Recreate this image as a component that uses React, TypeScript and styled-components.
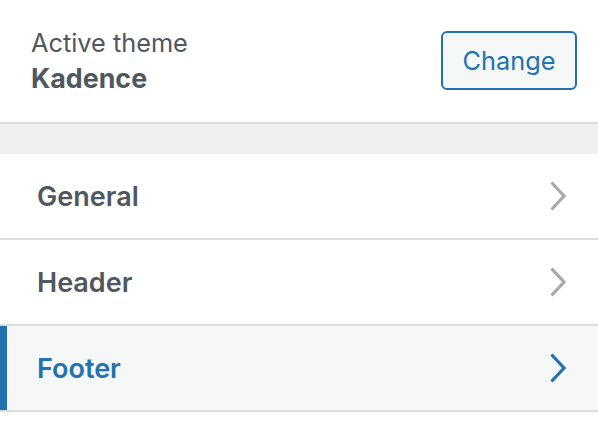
import React from "react";
import styled, { createGlobalStyle } from "styled-components";

const GlobalStyle = createGlobalStyle`
  body {
    margin: 0;
    background: #fff;
    font-family: Inter, "Liberation Sans", Arial, sans-serif;
  }
`;

const Panel = styled.div`
  width: 598px;
  height: 440px;
  background: #fff;
  overflow: hidden;
`;

const ThemeHeader = styled.div`
  display: flex;
  align-items: center;
  justify-content: space-between;
  height: 124px;
  box-sizing: border-box;
  padding: 0 21px 0 31px;
  border-bottom: 2px solid #dcdcde;
`;

const ThemeInfo = styled.div`
  display: flex;
  flex-direction: column;
  margin-top: -2px;
`;

const ThemeLabel = styled.span`
  font-size: 25.3px;
  line-height: 35px;
  color: #50575e;
`;

const ThemeName = styled.span`
  font-size: 26.8px;
  line-height: 36px;
  font-weight: 700;
  color: #50575e;
`;

const ChangeButton = styled.button`
  width: 136px;
  height: 59px;
  margin-top: -1px;
  border: 2px solid #2271b1;
  border-radius: 6px;
  background: #f6f7f7;
  color: #2271b1;
  font-family: inherit;
  font-size: 25.3px;
  padding: 0;
  cursor: pointer;
`;

const Spacer = styled.div`
  height: 30px;
  background: #f0f0f1;
`;

const SectionRow = styled.div<{ $active?: boolean }>`
  display: flex;
  align-items: center;
  justify-content: space-between;
  height: 86px;
  box-sizing: border-box;
  padding: 0 31px 0 37px;
  border-bottom: 2px solid #dcdcde;
  background: ${(p) => (p.$active ? "#f6f7f7" : "#fff")};
  box-shadow: ${(p) => (p.$active ? "inset 7px 0 0 #2271b1" : "none")};
  color: ${(p) => (p.$active ? "#2271b1" : "#50575e")};
`;

const SectionTitle = styled.span`
  font-size: 27px;
  font-weight: 600;
`;

const Chevron = ({ color }: { color: string }) => (
  <svg width="18" height="30" viewBox="0 0 18 30">
    <path d="M2.5 1.5 L15 15 L2.5 28.5" fill="none" stroke={color} strokeWidth="3.2" />
  </svg>
);

const sections = [
  { title: "General" },
  { title: "Header" },
  { title: "Footer", active: true },
];

export default function App() {
  return (
    <Panel>
      <GlobalStyle />
      <ThemeHeader>
        <ThemeInfo>
          <ThemeLabel>Active theme</ThemeLabel>
          <ThemeName>Kadence</ThemeName>
        </ThemeInfo>
        <ChangeButton>Change</ChangeButton>
      </ThemeHeader>
      <Spacer />
      {sections.map((s) => (
        <SectionRow key={s.title} $active={s.active}>
          <SectionTitle>{s.title}</SectionTitle>
          <Chevron color={s.active ? "#2271b1" : "#a7aaad"} />
        </SectionRow>
      ))}
    </Panel>
  );
}
